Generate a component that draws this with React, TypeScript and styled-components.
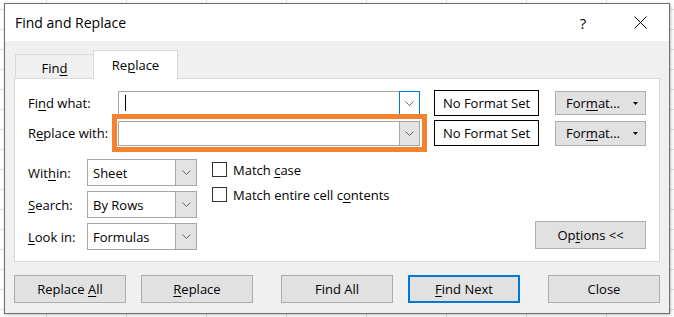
import React from "react"
import styled, { createGlobalStyle } from "styled-components"

const GlobalStyle = createGlobalStyle`
  html, body {
    margin: 0;
    padding: 0;
  }
  body {
    width: 674px;
    height: 317px;
    overflow: hidden;
    background-color: #fff;
    background-image:
      linear-gradient(to right, #dedede 1px, transparent 1px),
      linear-gradient(to bottom, #dedede 1px, transparent 1px);
    background-size: 80px 20px;
    background-position: 46px 9px;
    font-family: "Open Sans", "Noto Sans", sans-serif;
    font-size: 13px;
    color: #000;
  }
`

const Page = styled.div`
  padding: 3px 0 0 4px;
`

const Dialog = styled.div`
  box-sizing: border-box;
  width: 666px;
  height: 311px;
  border: 1px solid #6d6d6d;
  background: #f0f0f0;
  box-shadow: 1px 1px 3px rgba(0, 0, 0, 0.25);
  display: flex;
  flex-direction: column;
`

const TitleBar = styled.div`
  height: 37px;
  background: #fff;
  display: flex;
  align-items: center;
  padding-left: 10px;
`

const Title = styled.div`
  font-size: 14px;
  flex: 1;
`

const TitleButton = styled.div<{ $w: number }>`
  width: ${p => p.$w}px;
  height: 37px;
  display: flex;
  align-items: center;
  justify-content: center;
  font-size: 15px;
`

const Body = styled.div`
  padding: 9px 9px 0 9px;
  display: flex;
  flex-direction: column;
`

const Tabs = styled.div`
  display: flex;
  align-items: flex-end;
  padding-left: 1px;
  margin-bottom: -1px;
  position: relative;
  z-index: 1;
`

const Tab = styled.div<{ $active?: boolean; $w: number }>`
  box-sizing: border-box;
  width: ${p => p.$w}px;
  height: ${p => (p.$active ? 29 : 25)}px;
  border: 1px solid #d9d9d9;
  border-bottom: ${p => (p.$active ? "none" : "1px solid #d9d9d9")};
  border-right: ${p => (p.$active ? "1px solid #d9d9d9" : "none")};
  background: ${p => (p.$active ? "#fff" : "#f0f0f0")};
  display: flex;
  align-items: center;
  justify-content: center;
  padding-top: ${p => (p.$active ? 0 : 3)}px;
`

const Panel = styled.div`
  background: #fff;
  border: 1px solid #d9d9d9;
  padding: 11px 13px 11px 13px;
  display: flex;
  flex-direction: column;
`

const FieldRow = styled.div`
  display: flex;
  align-items: center;
  height: 26px;
  & + & {
    margin-top: 4px;
  }
`

const Label = styled.div<{ $w: number }>`
  width: ${p => p.$w}px;
  flex: none;
  white-space: nowrap;
`

const Key = styled.span`
  text-decoration: underline;
  text-underline-offset: 2px;
  text-decoration-thickness: 1px;
`

const ComboWrap = styled.div`
  position: relative;
  flex: none;
`

const Combo = styled.div<{ $w: number; $h: number }>`
  box-sizing: border-box;
  width: ${p => p.$w}px;
  height: ${p => p.$h}px;
  border: 1px solid #a6a6a6;
  background: #fff;
  display: flex;
  align-items: center;
`

const ComboText = styled.div`
  flex: 1;
  padding-left: 6px;
  display: flex;
  align-items: center;
`

const Caret = styled.div`
  width: 1px;
  height: 16px;
  background: #000;
`

const ArrowBox = styled.div<{ $focus?: boolean }>`
  box-sizing: border-box;
  width: 21px;
  height: calc(100% + 2px);
  margin: -1px -1px -1px 0;
  border: 1px solid ${p => (p.$focus ? "#0078d7" : "#a6a6a6")};
  background: ${p => (p.$focus ? "#fff" : "#e3e3e3")};
  display: flex;
  align-items: center;
  justify-content: center;
`

const Highlight = styled.div`
  position: absolute;
  top: -7px;
  left: -6px;
  right: -7px;
  bottom: -6px;
  border: 5px solid #f5822e;
  pointer-events: none;
`

const FormatBox = styled.div`
  box-sizing: border-box;
  width: 105px;
  height: 26px;
  margin-left: 14px;
  border: 1px solid #000;
  background: #fff;
  display: flex;
  align-items: center;
  justify-content: center;
`

const Button = styled.div<{ $w: number; $h?: number; $default?: boolean }>`
  box-sizing: border-box;
  width: ${p => p.$w}px;
  height: ${p => p.$h ?? 28}px;
  flex: none;
  background: #e1e1e1;
  border: ${p => (p.$default ? "2px solid #0078d7" : "1px solid #adadad")};
  display: flex;
  align-items: center;
  justify-content: center;
  white-space: pre;
`

const FormatButton = styled(Button)`
  margin-left: 16px;
  justify-content: flex-end;
  padding-right: 7px;
  gap: 13px;
`

const Lower = styled.div`
  display: flex;
  margin-top: 13px;
`

const SelectGrid = styled.div`
  display: grid;
  grid-template-columns: 59px 110px;
  grid-auto-rows: 27px;
  row-gap: 5px;
  align-items: center;
`

const Select = styled.div`
  box-sizing: border-box;
  height: 27px;
  border: 1px solid #a6a6a6;
  background: #fff;
  display: flex;
  align-items: center;
`

const SelectText = styled.div`
  flex: 1;
  padding-left: 5px;
`

const SelectArrow = styled.div`
  width: 20px;
  height: 100%;
  border-left: 1px solid #a6a6a6;
  background: #e3e3e3;
  display: flex;
  align-items: center;
  justify-content: center;
`

const Checks = styled.div`
  margin-left: 15px;
  display: flex;
  flex-direction: column;
  gap: 4px;
`

const CheckRow = styled.div`
  height: 21px;
  display: flex;
  align-items: center;
  gap: 6px;
`

const Box = styled.div`
  box-sizing: border-box;
  width: 15px;
  height: 15px;
  border: 1px solid #333;
  background: #fff;
`

const OptionsButton = styled(Button)`
  margin-left: auto;
  align-self: flex-end;
  margin-bottom: 1px;
`

const Footer = styled.div`
  display: flex;
  margin-top: 13px;
`

const Group = styled.div`
  display: flex;
  gap: 15px;
  & + & {
    margin-left: 28px;
  }
`

const Chevron = () => (
  <svg width="9" height="5" viewBox="0 0 9 5">
    <path d="M0.5 0.5 L4.5 4.5 L8.5 0.5" fill="none" stroke="#6a6a6a" strokeWidth="1" />
  </svg>
)

const Caretdown = () => (
  <svg width="5" height="3" viewBox="0 0 5 3">
    <path d="M0 0 H5 L2.5 3 Z" fill="#000" />
  </svg>
)

const CloseIcon = () => (
  <svg width="13" height="13" viewBox="0 0 13 13">
    <path d="M0.5 0.5 L12.5 12.5 M12.5 0.5 L0.5 12.5" stroke="#000" strokeWidth="1" />
  </svg>
)

const selects = [
  { label: <>Wit<Key>h</Key>in:</>, value: "Sheet" },
  { label: <><Key>S</Key>earch:</>, value: "By Rows" },
  { label: <><Key>L</Key>ook in:</>, value: "Formulas" },
]

export default function App() {
  return (
    <>
      <GlobalStyle />
      <Page>
        <Dialog>
          <TitleBar>
            <Title>Find and Replace</Title>
            <TitleButton $w={56}>?</TitleButton>
            <TitleButton $w={58}>
              <CloseIcon />
            </TitleButton>
          </TitleBar>
          <Body>
            <Tabs>
              <Tab $w={78}>
                <span>
                  Fin<Key>d</Key>
                </span>
              </Tab>
              <Tab $w={85} $active>
                <span>
                  Re<Key>p</Key>lace
                </span>
              </Tab>
            </Tabs>
            <Panel>
              <FieldRow>
                <Label $w={90}>
                  Fi<Key>n</Key>d what:
                </Label>
                <ComboWrap>
                  <Combo $w={302} $h={24}>
                    <ComboText>
                      <Caret />
                    </ComboText>
                    <ArrowBox $focus>
                      <Chevron />
                    </ArrowBox>
                  </Combo>
                </ComboWrap>
                <FormatBox>No Format Set</FormatBox>
                <FormatButton $w={91} $h={24}>
                  <span>
                    For<Key>m</Key>at...
                  </span>
                  <Caretdown />
                </FormatButton>
              </FieldRow>
              <FieldRow>
                <Label $w={90}>
                  R<Key>e</Key>place with:
                </Label>
                <ComboWrap>
                  <Combo $w={302} $h={25}>
                    <ComboText />
                    <ArrowBox>
                      <Chevron />
                    </ArrowBox>
                  </Combo>
                  <Highlight />
                </ComboWrap>
                <FormatBox>No Format Set</FormatBox>
                <FormatButton $w={91} $h={25}>
                  <span>
                    For<Key>m</Key>at...
                  </span>
                  <Caretdown />
                </FormatButton>
              </FieldRow>
              <Lower>
                <SelectGrid>
                  {selects.map((s, i) => (
                    <React.Fragment key={i}>
                      <Label $w={59}>{s.label}</Label>
                      <Select>
                        <SelectText>{s.value}</SelectText>
                        <SelectArrow>
                          <Chevron />
                        </SelectArrow>
                      </Select>
                    </React.Fragment>
                  ))}
                </SelectGrid>
                <Checks>
                  <CheckRow>
                    <Box />
                    <span>
                      Match <Key>c</Key>ase
                    </span>
                  </CheckRow>
                  <CheckRow>
                    <Box />
                    <span>
                      Match entire cell c<Key>o</Key>ntents
                    </span>
                  </CheckRow>
                </Checks>
                <OptionsButton $w={111}>
                  <span>
                    Op<Key>t</Key>ions &lt;&lt;
                  </span>
                </OptionsButton>
              </Lower>
            </Panel>
            <Footer>
              <Group>
                <Button $w={112}>
                  <span>
                    Replace <Key>A</Key>ll
                  </span>
                </Button>
                <Button $w={112}>
                  <span>
                    <Key>R</Key>eplace
                  </span>
                </Button>
              </Group>
              <Group>
                <Button $w={112}>
                  <span>Find All</span>
                </Button>
                <Button $w={112} $default>
                  <span>
                    <Key>F</Key>ind Next
                  </span>
                </Button>
              </Group>
              <Group>
                <Button $w={112}>
                  <span>Close</span>
                </Button>
              </Group>
            </Footer>
          </Body>
        </Dialog>
      </Page>
    </>
  )
}
